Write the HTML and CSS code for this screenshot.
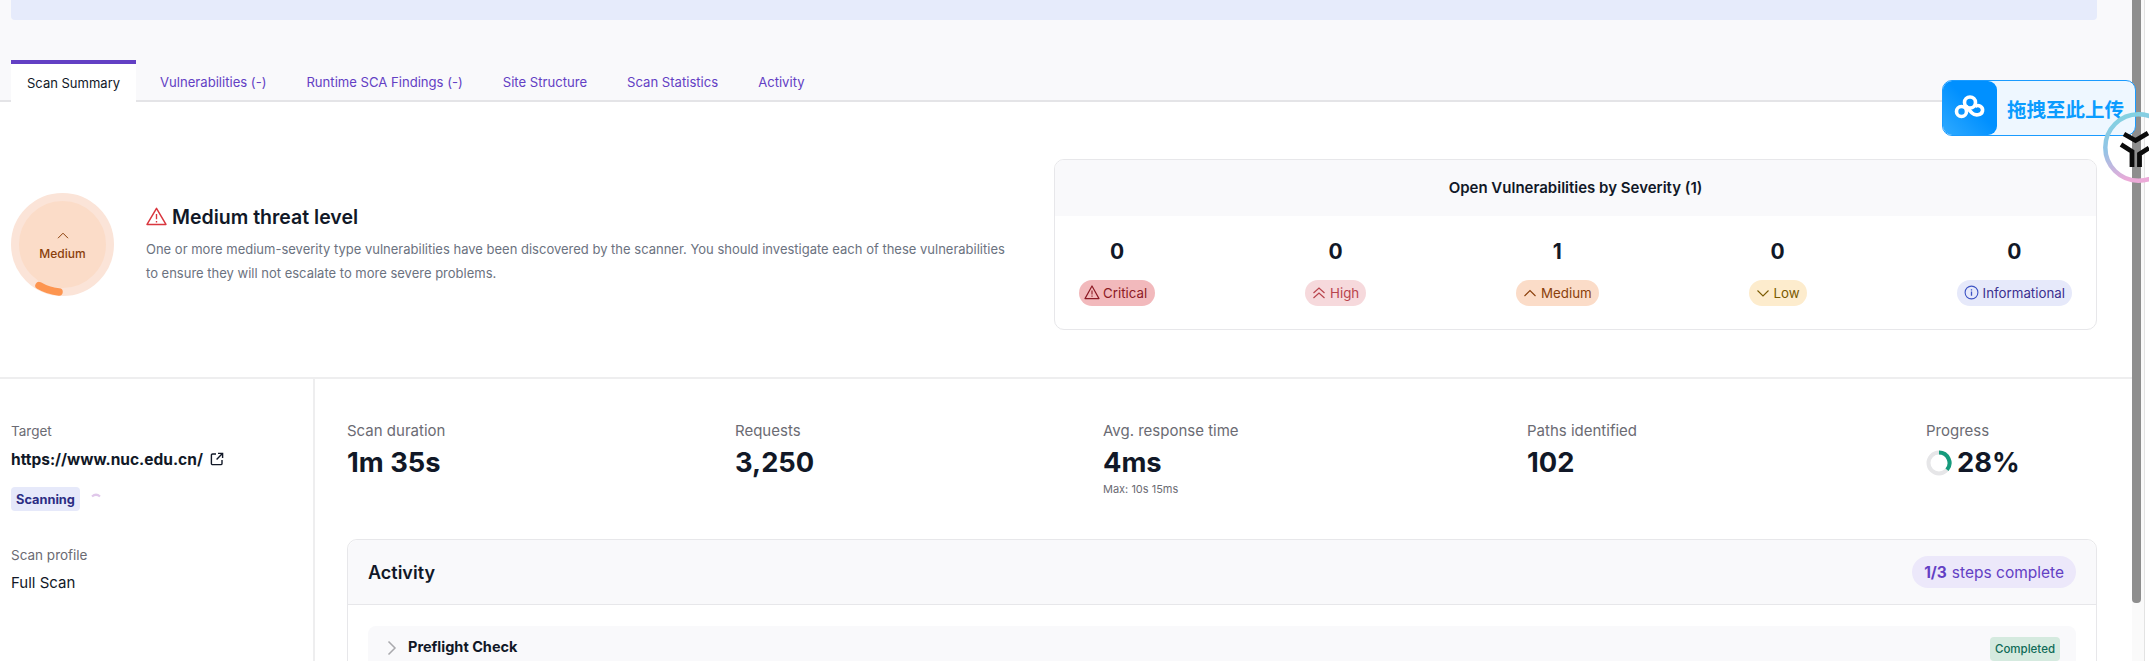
FILE: index.html
```html
<!DOCTYPE html>
<html lang="en">
<head>
<meta charset="utf-8">
<title>Scan Summary</title>
<link rel="stylesheet" href="styles.css">
</head>
<body>
<div class="app">
  <main class="main">
    <div class="top">
      <div class="banner"></div>
      <nav class="tabs">
        <a class="tab active">Scan Summary</a>
        <a class="tab">Vulnerabilities (-)</a>
        <a class="tab">Runtime SCA Findings (-)</a>
        <a class="tab">Site Structure</a>
        <a class="tab">Scan Statistics</a>
        <a class="tab">Activity</a>
      </nav>
    </div>

    <section class="threat">
      <div class="threat-left">
        <div class="gauge">
          <svg class="gauge-arc" viewBox="0 0 103 103" width="103" height="103">
            <path d="M28 92.6A47.5 47.5 0 0 0 48 99" fill="none" stroke="#fd9550" stroke-width="7.5" stroke-linecap="round"/>
          </svg>
          <svg class="gauge-chev" viewBox="0 0 12 7" width="12" height="7"><path d="M1 6.2 6 1.2l5 5" fill="none" stroke="#8a3f0b" stroke-width="1"/></svg>
          <span class="gauge-label">Medium</span>
        </div>
        <div class="threat-text">
          <h1 class="threat-title">
            <svg viewBox="0 0 20 18" width="21" height="19"><path d="M10 1.2 19 16.6H1Z" fill="none" stroke="#d9363e" stroke-width="1.4" stroke-linejoin="round"/><path d="M10 6.6v5M10 13.2v1.4" stroke="#d9363e" stroke-width="1.3"/></svg>
            Medium threat level
          </h1>
          <p class="threat-desc">One or more medium-severity type vulnerabilities have been discovered by the scanner. You should investigate each of these vulnerabilities<br>to ensure they will not escalate to more severe problems.</p>
        </div>
      </div>
      <div class="sev-card">
        <div class="sev-head">Open Vulnerabilities by Severity (1)</div>
        <div class="sev-row">
          <div class="sev">
            <span class="sev-num">0</span>
            <span class="pill critical"><svg viewBox="0 0 16 15" width="16" height="15"><path d="M8 1 15 13.6H1Z" fill="none" stroke="#8d1a25" stroke-width="1.2" stroke-linejoin="round"/><path d="M8 5.4v4M8 10.6v1.2" stroke="#8d1a25" stroke-width="1.1"/></svg>Critical</span>
          </div>
          <div class="sev">
            <span class="sev-num">0</span>
            <span class="pill high"><svg viewBox="0 0 14 14" width="14" height="14"><path d="M1.5 7 7 2l5.5 5M1.5 12 7 7l5.5 5" fill="none" stroke="#b8434c" stroke-width="1.2"/></svg>High</span>
          </div>
          <div class="sev">
            <span class="sev-num">1</span>
            <span class="pill medium"><svg viewBox="0 0 14 14" width="14" height="14"><path d="M1.5 10 7 4.5l5.5 5.5" fill="none" stroke="#8a3f0b" stroke-width="1.1"/></svg>Medium</span>
          </div>
          <div class="sev">
            <span class="sev-num">0</span>
            <span class="pill low"><svg viewBox="0 0 14 14" width="14" height="14"><path d="M1.5 4.5 7 10l5.5-5.5" fill="none" stroke="#7a5a00" stroke-width="1.1"/></svg>Low</span>
          </div>
          <div class="sev">
            <span class="sev-num">0</span>
            <span class="pill info"><svg viewBox="0 0 15 15" width="15" height="15"><circle cx="7.5" cy="7.5" r="6.4" fill="none" stroke="#3d53c4" stroke-width="1.1"/><path d="M7.5 6.6v4.2M7.5 4.2v1.3" stroke="#3d53c4" stroke-width="1.3"/></svg>Informational</span>
          </div>
        </div>
      </div>
    </section>

    <section class="lower">
      <aside class="side">
        <div class="label">Target</div>
        <div class="target">https://www.nuc.edu.cn/
          <svg viewBox="0 0 14 14" width="14" height="14"><path d="M6 2H2.6A1.2 1.2 0 0 0 1.4 3.2v8.2a1.2 1.2 0 0 0 1.2 1.2h8.2a1.2 1.2 0 0 0 1.2-1.2V8M8 1.4h4.6V6M12.4 1.6 6.6 7.4" fill="none" stroke="#111827" stroke-width="1.4"/></svg>
        </div>
        <div class="status">
          <span class="scanning">Scanning</span>
          <svg viewBox="0 0 10 5" width="10" height="5"><path d="M1 3.500Q5 0 9 3.500" fill="none" stroke="#e0c8ea" stroke-width="2.200"/></svg>
        </div>
        <div class="label profile">Scan profile</div>
        <div class="profile-val">Full Scan</div>
      </aside>
      <div class="content">
        <div class="stats">
          <div class="stat"><div class="stat-label">Scan duration</div><div class="value">1m 35s</div></div>
          <div class="stat"><div class="stat-label">Requests</div><div class="value">3,250</div></div>
          <div class="stat"><div class="stat-label">Avg. response time</div><div class="value">4ms</div><div class="max">Max: 10s 15ms</div></div>
          <div class="stat"><div class="stat-label">Paths identified</div><div class="value">102</div></div>
          <div class="stat"><div class="stat-label">Progress</div>
            <div class="value progress">
              <svg viewBox="0 0 26 26" width="26" height="26"><circle cx="13" cy="13" r="10.5" fill="none" stroke="#e6e6e8" stroke-width="4"/><path d="M13 2.5A10.5 10.5 0 0 1 21 19.8" fill="none" stroke="#159b7c" stroke-width="4"/></svg>28%
            </div>
          </div>
        </div>
        <div class="activity">
          <div class="activity-head">
            <h2>Activity</h2>
            <span class="steps"><b>1/3</b> steps complete</span>
          </div>
          <div class="activity-body">
            <div class="step">
              <svg viewBox="0 0 10 16" width="10" height="16"><path d="M1.5 1.5 8 8l-6.500 6.500" fill="none" stroke="#a9a9ad" stroke-width="1.5"/></svg>
              <span class="step-name">Preflight Check</span>
              <span class="completed">Completed</span>
            </div>
          </div>
        </div>
      </div>
    </section>
  </main>
  <div class="rail"><div class="thumb"></div></div>
</div>

<div class="upload">
  <span class="upload-logo">
    <svg viewBox="0 0 54 54" width="54" height="54"><g fill="none" stroke="#fff" stroke-width="3.6"><circle cx="27" cy="21.500" r="5.500"/><circle cx="18.500" cy="30.500" r="5"/><path d="M23 25c2 2 3 4 6 7 3 3 9.500 2.500 10.500-2 .8-4-4-7-7.500-4.500"/></g></svg>
  </span>
  <span class="upload-text">拖拽至此上传</span>
</div>
<div class="orb">
  <svg viewBox="0 0 71 71" width="71" height="71">
    <defs><linearGradient id="orbg" x1="0" y1="0" x2="0.3" y2="1"><stop offset="0" stop-color="#7fd4e0"/><stop offset="0.5" stop-color="#93c4e6"/><stop offset="1" stop-color="#ecaad8"/></linearGradient></defs>
    <circle cx="35.500" cy="35.500" r="33.200" fill="none" stroke="url(#orbg)" stroke-width="4.500"/>
    <g fill="none" stroke="#0b0b0b" stroke-width="4.800" stroke-linecap="butt">
      <path d="M21 22 32.500 28.500 45 21"/><path d="M18 32.500 29 39.500V55"/><path d="M46 36 36.500 42V55"/>
    </g>
  </svg>
</div>
</body>
</html>
```

FILE: styles.css
```css
* { box-sizing: border-box; }
html, body { margin: 0; height: 661px; overflow: hidden; }
body { font-family: "Inter", "Noto Sans", sans-serif; color: #111827; background: #fff; position: relative; }
h1, h2, p { margin: 0; }

.app { display: flex; height: 661px; }
.main { flex: 1; min-width: 0; }

.top { background: #f9f9fb; height: 102px; }
.banner { height: 20px; margin: 0 35px 40px 11px; background: #e6ebfb; border-radius: 0 0 4px 4px; }
.tabs { display: flex; height: 42px; padding-left: 11px; border-bottom: 2px solid #e4e4e7; }
.tab { display: flex; align-items: center; padding: 4px 20px 0; font-size: 13.100px; color: #6340c4; white-space: nowrap; }
.tab.active { height: 42px; padding: 0 16px; margin-right: 4px; font-size: 13px; color: #111827; background: #fff; border-top: 4px solid #6340c4; }

.threat { display: flex; justify-content: space-between; align-items: center; height: 277px; padding: 9px 35px 0 11px; border-bottom: 2px solid #eeeeef; }
.threat-left { display: flex; align-items: center; gap: 32px; }
.gauge { position: relative; flex: none; width: 103px; height: 103px; padding-top: 5px; border-radius: 50%; background: #fbdcc8; border: 8px solid #fbe4d8; display: flex; flex-direction: column; align-items: center; justify-content: center; gap: 7px; }
.gauge-arc { position: absolute; left: -8px; top: -8px; }
.gauge-label { font-size: 12px; font-weight: 500; color: #8a3f0b; }
.threat-title { display: flex; align-items: center; gap: 5px; font-size: 19.500px; font-weight: 600; line-height: 26px; margin-bottom: 7px; }
.threat-desc { font-size: 13px; line-height: 24px; color: #6b7280; }

.sev-card { width: 1043px; height: 171px; border: 1px solid #e7e7ea; border-radius: 10px; overflow: hidden; }
.sev-head { height: 56px; background: #f9f9fb; display: flex; align-items: center; justify-content: center; font-size: 15px; font-weight: 600; }
.sev-row { display: flex; justify-content: space-between; padding: 24px 24px 0; }
.sev { display: flex; flex-direction: column; align-items: center; gap: 16px; }
.sev-num { font-size: 21px; font-weight: 700; line-height: 24px; }
.pill { display: flex; align-items: center; gap: 4px; height: 26px; padding: 0 7px; border-radius: 13px; font-size: 13.300px; white-space: nowrap; }
.critical { background: #f2b9bc; color: #8d1a25; padding: 0 8px 0 5px; gap: 3px; }
.high { background: #f6d9dc; color: #b8434c; }
.medium { background: #fbdcc8; color: #8a3f0b; }
.low { background: #fdeccd; color: #7a5a00; }
.info { background: #e6e9fa; color: #3b2f8f; }

.lower { display: flex; height: 282px; }
.side { width: 315px; flex: none; padding: 42px 0 0 11px; border-right: 2px solid #eeeeef; }
.label { font-size: 13.500px; line-height: 20px; color: #6b6b73; }
.target { display: flex; align-items: center; gap: 7px; margin-top: 8px; height: 20px; font-size: 15.500px; font-weight: 700; }
.status { display: flex; align-items: flex-start; gap: 11px; margin-top: 18px; }
.scanning { height: 24px; padding: 0 5px; display: flex; align-items: center; border-radius: 4px; background: #e6e9fa; color: #2b2d83; font-size: 12.800px; font-weight: 700; }
.status svg { margin-top: 6px; }
.profile { margin-top: 34px; }
.profile-val { margin-top: 8px; font-size: 15px; line-height: 20px; }

.content { flex: 1; min-width: 0; padding: 42px 35px 0 32px; }
.stats { display: grid; grid-template-columns: 388px 368px 424px 399px 1fr; height: 118px; }
.stat-label { font-size: 15px; line-height: 20px; color: #6b6b73; }
.value { font-size: 27.300px; font-weight: 700; line-height: 34px; margin-top: 5px; }
.progress { display: flex; align-items: center; gap: 5px; }
.max { font-size: 11px; line-height: 14px; margin-top: 2px; color: #6b6b73; }

.activity { border: 1px solid #e7e7ea; border-radius: 10px 10px 0 0; }
.activity-head { height: 65px; display: flex; justify-content: space-between; align-items: center; padding: 0 20px; background: #f9f9fb; border-bottom: 1px solid #e7e7ea; border-radius: 10px 10px 0 0; }
.activity-head h2 { font-size: 18px; font-weight: 600; }
.steps { height: 32px; padding: 0 12px; display: flex; align-items: center; gap: 5px; border-radius: 16px; background: #ece8fa; color: #6340c4; font-size: 15.500px; }
.steps b { font-weight: 700; }
.activity-body { padding: 21px 20px 0; }
.step { height: 60px; display: flex; align-items: flex-start; padding: 11px 16px 0 19px; background: #f9f9fb; border-radius: 8px 8px 0 0; }
.step svg { margin: 3px 11px 0 0; }
.step-name { font-size: 14.500px; font-weight: 700; line-height: 20px; }
.completed { margin-left: auto; height: 24px; padding: 0 5px; display: flex; align-items: center; border-radius: 4px; background: #d5eadf; color: #0f6b57; font-size: 11.500px; font-weight: 500; }

.rail { width: 17px; flex: none; background: #fafafa; border-right: 4px solid #fff; position: relative; }
.rail::after { content: ""; position: absolute; top: 0; bottom: 0; right: 0; width: 1px; background: #e3e3e3; }
.thumb { width: 9px; height: 603px; background: #8e8e8e; border-radius: 0 0 4px 4px; }

.upload { position: absolute; left: 1942px; top: 80px; width: 194px; height: 56px; display: flex; align-items: center; background: #eef7ff; border: 1px solid #1a9bff; border-radius: 10px; }
.upload-logo { flex: none; width: 54px; height: 54px; border-radius: 9px; background: linear-gradient(45deg, #30aaff, #0090ff 55%); }
.upload-text { margin-left: 10px; font-family: "Noto Sans CJK SC", sans-serif; font-size: 19.500px; font-weight: 700; color: #0a9cff; white-space: nowrap; }
.orb { position: absolute; left: 2103px; top: 112px; width: 71px; height: 71px; }
```
